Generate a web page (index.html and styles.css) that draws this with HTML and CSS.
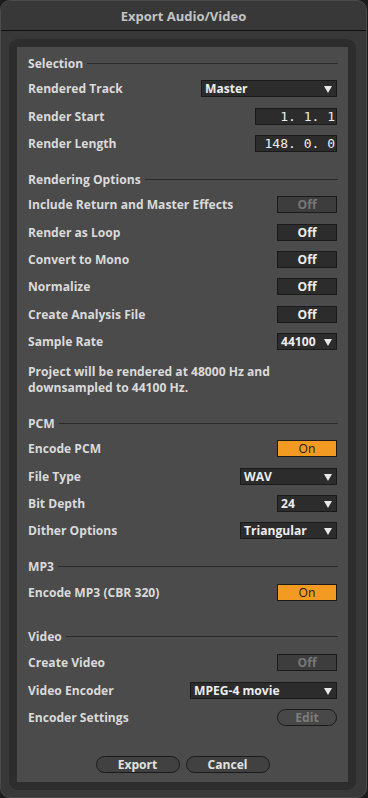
FILE: index.html
```html
<!DOCTYPE html>
<html>
<head>
  <title>Export Audio/Video</title>
  <link rel="stylesheet" href="styles.css">
</head>
<body>
  <div class="window">
    <div class="titlebar">Export Audio/Video</div>

    <div class="frame">
      <div class="panel">

        <div class="section-header"><span>Selection</span></div>
        <div class="row">
          <span class="label">Rendered Track</span>
          <div class="dropdown w-master">Master<span class="arrow"></span></div>
        </div>
        <div class="row">
          <span class="label">Render Start</span>
          <div class="numbox">1.&nbsp;1.&nbsp;1</div>
        </div>
        <div class="row">
          <span class="label">Render Length</span>
          <div class="numbox">148.&nbsp;0.&nbsp;0</div>
        </div>

        <div class="section-header"><span>Rendering Options</span></div>
        <div class="row">
          <span class="label">Include Return and Master Effects</span>
          <div class="toggle disabled">Off</div>
        </div>
        <div class="row">
          <span class="label">Render as Loop</span>
          <div class="toggle">Off</div>
        </div>
        <div class="row">
          <span class="label">Convert to Mono</span>
          <div class="toggle">Off</div>
        </div>
        <div class="row">
          <span class="label">Normalize</span>
          <div class="toggle">Off</div>
        </div>
        <div class="row">
          <span class="label">Create Analysis File</span>
          <div class="toggle">Off</div>
        </div>
        <div class="row">
          <span class="label">Sample Rate</span>
          <div class="dropdown w-rate">44100<span class="arrow"></span></div>
        </div>
        <div class="note">
          <span>Project will be rendered at 48000 Hz and</span>
          <span>downsampled to 44100 Hz.</span>
        </div>

        <div class="section-header"><span>PCM</span></div>
        <div class="row">
          <span class="label">Encode PCM</span>
          <div class="toggle on">On</div>
        </div>
        <div class="row">
          <span class="label">File Type</span>
          <div class="dropdown w-wide">WAV<span class="arrow"></span></div>
        </div>
        <div class="row">
          <span class="label">Bit Depth</span>
          <div class="dropdown w-rate">24<span class="arrow"></span></div>
        </div>
        <div class="row">
          <span class="label">Dither Options</span>
          <div class="dropdown w-wide">Triangular<span class="arrow"></span></div>
        </div>

        <div class="section-header"><span>MP3</span></div>
        <div class="row">
          <span class="label">Encode MP3 (CBR 320)</span>
          <div class="toggle on">On</div>
        </div>

        <div class="section-header video"><span>Video</span></div>
        <div class="row first-video">
          <span class="label">Create Video</span>
          <div class="toggle disabled">Off</div>
        </div>
        <div class="row">
          <span class="label">Video Encoder</span>
          <div class="dropdown w-encoder">MPEG-4 movie<span class="arrow"></span></div>
        </div>
        <div class="row">
          <span class="label">Encoder Settings</span>
          <div class="pill disabled">Edit</div>
        </div>

        <div class="actions">
          <div class="pill action">Export</div>
          <div class="pill action">Cancel</div>
        </div>

      </div>
    </div>
  </div>
</body>
</html>
```

FILE: styles.css
```css
* {
  margin: 0;
  padding: 0;
  box-sizing: border-box;
}

html, body {
  width: 100%;
  height: 100%;
}

body {
  background-color: #1c1c1c;
  font-family: 'Open Sans', 'Liberation Sans', sans-serif;
  font-size: 12.1px;
  font-weight: 700;
  color: #dadada;
  overflow: hidden;
}

.window {
  width: 367px;
  height: 798px;
  background-color: #383838;
  border: 1px solid #4a4a4a;
  border-radius: 10px;
  display: flex;
  flex-direction: column;
}

.titlebar {
  height: 30px;
  flex-shrink: 0;
  border-bottom: 1px solid #111111;
  display: flex;
  align-items: center;
  justify-content: center;
  font-size: 13px;
  font-weight: 700;
  color: #c4c4c4;
}

.frame {
  margin: 8px 10px 0 8px;
  background-color: #2d2d2d;
  border-radius: 9px;
  padding: 8px;
  height: 751px;
}

.panel {
  background-color: #4b4b4b;
  height: 100%;
  padding: 5px 11px 0 11px;
  display: flex;
  flex-direction: column;
}

/* Section headers with rule */
.section-header {
  height: 23px;
  display: flex;
  align-items: center;
  gap: 4px;
  margin-top: 10.75px;
}

.section-header:first-child {
  margin-top: 0;
}

.section-header::after {
  content: '';
  flex: 1;
  height: 1px;
  background-color: #2a2a2a;
  margin-right: -1px;
}

.section-header.video {
  margin-top: 19.5px;
}

.row {
  height: 27.4px;
  display: flex;
  align-items: center;
  justify-content: space-between;
}

.row.first-video {
  margin-top: 1px;
}

.label {
  white-space: nowrap;
}

.note {
  display: flex;
  flex-direction: column;
  line-height: 16px;
  padding-top: 8.5px;
  margin-bottom: 5.5px;
}

/* Controls */
.toggle, .dropdown, .numbox {
  height: 17px;
  background-color: #2c2c2c;
  border: 1px solid #1a1a1a;
  display: flex;
  align-items: center;
  color: #ececec;
}

.toggle {
  width: 60px;
  justify-content: center;
}

.toggle.disabled {
  background-color: #3d3d3d;
  color: #777777;
}

.toggle.on {
  background-color: #f39a22;
  color: #1a1a1a;
  font-weight: 400;
}

.dropdown {
  padding-left: 3px;
  position: relative;
}

.arrow {
  position: absolute;
  right: 4px;
  top: 5px;
  width: 0;
  height: 0;
  border-left: 4.5px solid transparent;
  border-right: 4.5px solid transparent;
  border-top: 7px solid #e8e8e8;
}

.w-master { width: 136px; }
.w-rate { width: 60px; }
.w-wide { width: 97px; }
.w-encoder { width: 147px; }

.numbox {
  width: 82px;
  justify-content: flex-end;
  padding-right: 1px;
  font-family: 'DejaVu Sans Mono', 'Liberation Mono', monospace;
  font-size: 13px;
  font-weight: 400;
}

.pill {
  height: 17px;
  border: 1px solid #1a1a1a;
  border-radius: 9px;
  background-color: #414141;
  display: flex;
  align-items: center;
  justify-content: center;
}

.pill.disabled {
  width: 60px;
  background-color: #484848;
  color: #7c7c7c;
}

.actions {
  margin-top: auto;
  margin-bottom: 9px;
  display: flex;
  justify-content: center;
  gap: 6px;
}

.pill.action {
  width: 84px;
  color: #e2e2e2;
}
```
